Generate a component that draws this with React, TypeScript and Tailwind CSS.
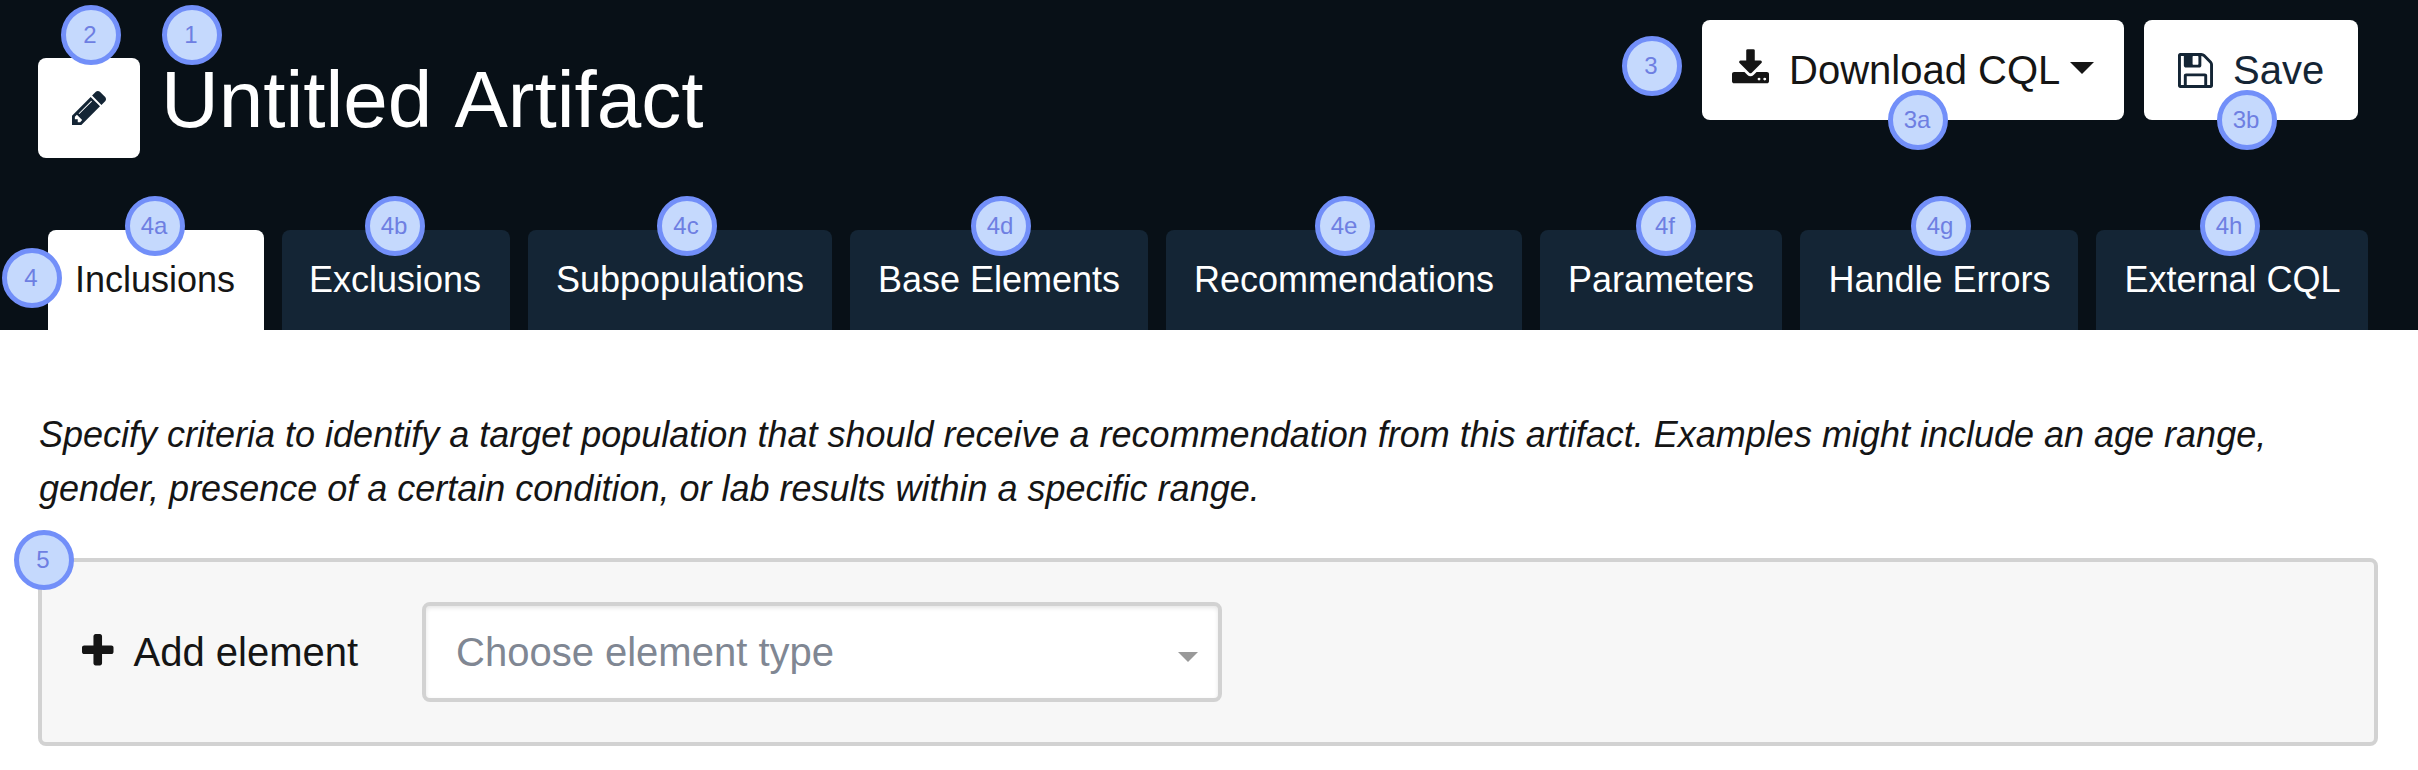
import React from "react";

const ICONS = {
  pencil: {
    box: "128 149 1515 1515",
    d: "M491 1536l91-91-235-235-91 91v107h128v128h107zm523-928q0-22-22-22-10 0-17 7l-542 542q-7 7-7 17 0 22 22 22 10 0 17-7l542-542q7-7 7-17zm-54-192l416 416-832 832h-416v-416zm683 96q0 53-37 90l-166 166-416-416 166-165q36-38 90-38 53 0 91 38l235 234q37 39 37 91z",
  },
  download: {
    box: "64 0 1664 1536",
    d: "M1344 1344q0-26-19-45t-45-19-45 19-19 45 19 45 45 19 45-19 19-45zm256 0q0-26-19-45t-45-19-45 19-19 45 19 45 45 19 45-19 19-45zm128-224v320q0 40-28 68t-68 28h-1472q-40 0-68-28t-28-68v-320q0-40 28-68t68-28h465l135 136q58 56 136 56t136-56l136-136h464q40 0 68 28t28 68zm-325-569q17 41-14 70l-448 448q-18 19-45 19t-45-19l-448-448q-31-29-14-70 17-39 59-39h256v-448q0-26 19-45t45-19h256q26 0 45 19t19 45v448h256q42 0 59 39z",
  },
  floppy: {
    box: "128 128 1536 1536",
    d: "M512 1536h768v-384h-768v384zm896 0h128v-896q0-14-10-38.5t-20-34.5l-281-281q-10-10-34-20t-39-10v416q0 40-28 68t-68 28h-576q-40 0-68-28t-28-68v-416h-128v1280h128v-416q0-40 28-68t68-28h832q40 0 68 28t28 68v416zm-384-928v-320q0-13-9.5-22.5t-22.5-9.5h-192q-13 0-22.5 9.5t-9.5 22.5v320q0 13 9.5 22.5t22.5 9.5h192q13 0 22.5-9.5t9.5-22.5zm640 32v928q0 40-28 68t-68 28h-1344q-40 0-68-28t-28-68v-1344q0-40 28-68t68-28h928q40 0 88 20t76 48l280 280q28 28 48 76t20 88z",
  },
  plus: {
    box: "192 128 1408 1408",
    d: "M1600 736v192q0 40-28 68t-68 28h-416v416q0 40-28 68t-68 28h-192q-40 0-68-28t-28-68v-416h-416q-40 0-68-28t-28-68v-192q0-40 28-68t68-28h416v-416q0-40 28-68t68-28h192q40 0 68 28t28 68v416h416q40 0 68 28t28 68z",
  },
};

function Icon({ name, className }: { name: keyof typeof ICONS; className: string }) {
  return (
    <svg viewBox={ICONS[name].box} fill="currentColor" className={"shrink-0 " + className}>
      <path d={ICONS[name].d} />
    </svg>
  );
}

function Caret({ className }: { className: string }) {
  return (
    <svg viewBox="0 0 24 12" fill="currentColor" preserveAspectRatio="none" className={"shrink-0 " + className}>
      <path d="M0 0H24L12 12Z" />
    </svg>
  );
}

// Numbered marker that floats over the control it describes.
function Marker({ label, className }: { label: string; className: string }) {
  return (
    <span
      className={
        "absolute z-10 flex size-[60px] items-center justify-center rounded-full border-[5px] border-[#728ff9] bg-[#c5d9fd] pr-[2px] text-[24px] leading-none font-normal text-[#6e7fe2] " +
        className
      }
    >
      {label}
    </span>
  );
}

const TABS = [
  { name: "Inclusions", width: "w-[216px] pr-[2px]", label: "4a", at: "left-[77px]" },
  { name: "Exclusions", width: "w-[228px] pr-[2px]", label: "4b", at: "left-[83px]" },
  { name: "Subpopulations", width: "w-[304px]", label: "4c", at: "left-[129px]" },
  { name: "Base Elements", width: "w-[298px]", label: "4d", at: "left-[121px]" },
  { name: "Recommendations", width: "w-[356px]", label: "4e", at: "left-[149px]" },
  { name: "Parameters", width: "w-[242px]", label: "4f", at: "left-[96px]" },
  { name: "Handle Errors", width: "w-[278px] pl-[1px]", label: "4g", at: "left-[111px]" },
  { name: "External CQL", width: "w-[272px] pl-[1px]", label: "4h", at: "left-[104px]" },
];

export default function App() {
  return (
    <div className="flex h-[770px] w-[2418px] flex-col overflow-hidden bg-white font-['Liberation_Sans',Arial,sans-serif] text-[#151515]">
      <header className="flex h-[330px] flex-col justify-between bg-[#081017]">
        <div className="flex items-start justify-between pt-5 pr-[60px] pl-[38px]">
          <div className="flex pt-[38px]">
            <button className="relative flex h-[100px] w-[102px] items-center justify-center rounded-lg bg-white text-[#142535]">
              <Icon name="pencil" className="size-[34px]" />
              <Marker label="2" className="top-[-53px] left-[23px]" />
            </button>
            <h1 className="relative ml-[21px] text-[80px] leading-[84px] whitespace-nowrap text-white [font-kerning:none]">
              Untitled Artifact
              <Marker label="1" className="top-[-53px] left-[1px]" />
            </h1>
          </div>
          <div className="relative flex gap-5 text-[40px]">
            <Marker label="3" className="top-[16px] left-[-80px]" />
            <button className="relative flex h-[100px] w-[422px] items-center rounded-lg bg-white pl-[30px] whitespace-nowrap">
              <Icon name="download" className="mt-[-7px] h-[34.5px] w-[37px]" />
              <span className="ml-[20px]">Download CQL</span>
              <Caret className="mt-[-4px] ml-[10px] h-[12px] w-[24px]" />
              <Marker label="3a" className="top-[70px] left-[186px]" />
            </button>
            <button className="relative flex h-[100px] w-[214px] items-center rounded-lg bg-white pl-[34px] text-[#142535]">
              <Icon name="floppy" className="size-[35px]" />
              <span className="ml-[20px]">Save</span>
              <Marker label="3b" className="top-[70px] left-[73px]" />
            </button>
          </div>
        </div>
        <nav className="relative flex gap-[18px] pl-12">
          <Marker label="4" className="top-[18px] left-[2px]" />
          {TABS.map((tab, i) => (
            <button
              key={tab.name}
              className={
                "relative flex h-[100px] shrink-0 items-center justify-center rounded-t-lg text-[36px] whitespace-nowrap " +
                tab.width +
                (i === 0 ? " bg-white text-[#151515]" : " bg-[#142535] text-white")
              }
            >
              {tab.name}
              <Marker label={tab.label} className={"top-[-34px] " + tab.at} />
            </button>
          ))}
        </nav>
      </header>
      <main className="flex flex-col pt-[78px] pr-[40px] pl-[38px]">
        <p className="pl-px text-[36px] leading-[54px] italic">
          Specify criteria to identify a target population that should receive a recommendation from this artifact.
          Examples might include an age range, gender, presence of a certain condition, or lab results within a
          specific range.
        </p>
        <section className="relative mt-[42px] flex h-[188px] items-center rounded-lg border-4 border-[#d2d2d2] bg-[#f7f7f7] pl-10">
          <Marker label="5" className="top-[-32px] left-[-28px]" />
          <div className="flex w-[340px] items-center text-[40px] whitespace-nowrap">
            <Icon name="plus" className="mt-[-4px] size-[31.5px]" />
            <span className="ml-[20px]">Add element</span>
          </div>
          <div className="flex h-[100px] w-[800px] items-center justify-between rounded-lg border-4 border-[#d2d2d2] bg-white pr-5 pl-[30px] text-[40px] text-[#808793] shadow-[inset_0_2px_4px_rgba(0,0,0,0.1)]">
            <span>Choose element type</span>
            <Caret className="mt-[10px] h-[10px] w-[20px] text-[#999999]" />
          </div>
        </section>
      </main>
    </div>
  );
}
